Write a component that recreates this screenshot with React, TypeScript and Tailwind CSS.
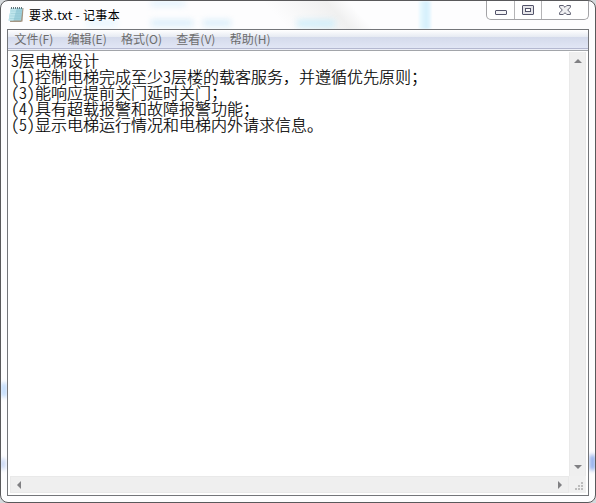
const menus = ["文件(F)", "编辑(E)", "格式(O)", "查看(V)", "帮助(H)"];

const lines = [
  "3层电梯设计",
  "(1)控制电梯完成至少3层楼的载客服务，并遵循优先原则；",
  "(3)能响应提前关门延时关门；",
  "(4)具有超载报警和故障报警功能；",
  "(5)显示电梯运行情况和电梯内外请求信息。",
];

function NotepadIcon() {
  return (
    <svg width="17" height="17" viewBox="0 0 17 17" className="shrink-0">
      <path d="M3.500 2h12l-1 13.500-2 .5H2z" fill="#a39583" />
      <path d="M2.800 2h11.800l-1.600 12.500H.6z" fill="#9ccfdb" />
      <path d="M2.800 2h6L5.500 14.500H.6z" fill="#bfe5ec" />
      <path d="M3 5h10.800M2.700 7.500h10.700M2.200 10h10.800M1.600 12.500h10.800" stroke="#8cc3d0" strokeWidth=".4" />
      <path d="M3.500 1v2M5.500 1v2M7.500 1v2M9.500 1v2M11.500 1v2M13.500 1v2" stroke="#60757b" strokeWidth="1" />
    </svg>
  );
}

function WindowButtons() {
  return (
    <div className="flex h-[19px] w-[103px] shrink-0 rounded-b-[5px] border border-t-0 border-[#a3a3a6] bg-white/70">
      <div className="flex w-[28px] justify-center border-r border-[#b4b4b6]">
        <svg width="12" height="18" viewBox="0 0 12 18">
          <rect x=".5" y="9.500" width="11" height="4" rx=".5" fill="#f4f4f6" stroke="#53546a" />
        </svg>
      </div>
      <div className="flex w-[27px] justify-center border-r border-[#b4b4b6]">
        <svg width="12" height="18" viewBox="0 0 12 18">
          <rect x=".5" y="4.500" width="11" height="9" rx=".5" fill="#e6e6ea" stroke="#53546a" />
          <rect x="3.500" y="7.500" width="5" height="3" fill="#fff" stroke="#53546a" />
        </svg>
      </div>
      <div className="flex flex-1 justify-center">
        <svg width="12" height="18" viewBox="0 0 12 18">
          <path d="M.6 4.500h3.600L6 6.300l1.800-1.800h3.600v1.700L8.700 9l2.700 2.800v1.700H7.800L6 11.700l-1.800 1.800H.6v-1.700L3.300 9 .6 6.200z" fill="#f0f0f2" stroke="#5d5e70" strokeLinejoin="round" />
        </svg>
      </div>
    </div>
  );
}

function Arrow({ d }: { d: string }) {
  return (
    <svg width="8" height="8" viewBox="0 0 8 8" className="shrink-0">
      <path d={d} fill="#808083" />
    </svg>
  );
}

// hwid keeps digits and brackets at half an ideograph; the comma stays full width
function Line({ text }: { text: string }) {
  return (
    <p className="whitespace-nowrap [font-feature-settings:'hwid']">
      {text.split(/(，)/).map((part, i) =>
        part === "，" ? <span key={i} className="[font-feature-settings:normal]">{part}</span> : part,
      )}
    </p>
  );
}

export default function App() {
  return (
    <div className="h-[503px] w-[596px] bg-[#d5d9dc] font-['Noto_Sans_CJK_SC',sans-serif]" lang="zh-CN">
      <div className="relative flex h-full flex-col overflow-hidden rounded-[8px] border border-[#59595b] bg-[#fdfdfe] pr-[6px] pb-[6px] pl-[6px]">
        <div className="absolute inset-x-0 top-0 h-[28px] overflow-hidden">
          <div className="absolute top-0 left-[250px] h-full w-[160px] bg-[linear-gradient(48deg,transparent_20%,#f0f0f0_54%,transparent_66%)]" />
          <div className="absolute top-0 left-[150px] h-[5px] w-[34px] bg-[#dff1fd] blur-[3px]" />
          <div className="absolute top-[19px] left-[86px] h-[6px] w-[30px] bg-[#e6f6fe] blur-[3px]" />
          <div className="absolute top-[19px] left-[150px] h-[6px] w-[42px] bg-[#d8edfa] blur-[3px]" />
          <div className="absolute top-[19px] left-[202px] h-[6px] w-[28px] bg-[#d8edfa] blur-[3px]" />
          <div className="absolute top-[19px] left-[296px] h-[7px] w-[38px] bg-[#cfeefa] blur-[3px]" />
          <div className="absolute top-0 left-[418px] h-full w-[12px] bg-[linear-gradient(90deg,#ecfbff,#d4effc_60%,#e8f8ff)] blur-[1px]" />
        </div>
        <div className="absolute top-[382px] left-0 h-[14px] w-[6px] bg-[#bdd9fb] blur-[2px]" />
        <div className="absolute top-[458px] left-0 h-[10px] w-[4px] bg-[#b6c9ef] blur-[2px]" />
        <div className="absolute top-[454px] right-0 h-[15px] w-[5px] bg-[#7fa0e8] blur-[2px]" />

        <div className="relative flex h-[28px] shrink-0 items-start justify-between">
          <div className="flex items-center gap-1 pt-[5px] pl-px">
            <NotepadIcon />
            <span className="text-[12px] leading-[17px] tracking-[0.3px] whitespace-nowrap text-black">要求.txt - 记事本</span>
          </div>
          <WindowButtons />
        </div>

        <div className="relative flex min-h-0 flex-1 flex-col border border-[#737579] bg-white">
          <div className="flex h-[19px] shrink-0 items-center gap-[14.3px] border-b border-[#b4b8d0] bg-[linear-gradient(#ffffff_0px,#e6eaf2_7px,#d4daeb_7px,#e1e6f5_18px)] pl-[6.5px] text-[12px] leading-[18px] text-[#6d6d6d]">
            {menus.map((menu) => (
              <span key={menu} className="whitespace-nowrap">{menu}</span>
            ))}
          </div>
          <div className="h-px shrink-0 bg-[#eceef7]" />
          <div className="flex min-h-0 flex-1 flex-col border-t border-[#a2a5aa] px-[2px] pt-px pb-[2px]">
            <div className="flex min-h-0 flex-1">
              <div className="min-w-0 flex-1 pl-px text-[16px] leading-[16px] font-light text-black [-webkit-text-stroke:0.2px_black]">
                {lines.map((line) => (
                  <Line key={line} text={line} />
                ))}
              </div>
              <div className="flex w-[17px] shrink-0 flex-col items-center justify-between border-x border-[#e9e9e9] bg-[#efefef] py-[5px]">
                <Arrow d="M0 6 4 2 8 6z" />
                <Arrow d="M0 2h8L4 6z" />
              </div>
            </div>
            <div className="flex h-[17px] shrink-0">
              <div className="flex flex-1 items-center justify-between border border-[#e9e9e9] bg-[#efefef] px-1">
                <Arrow d="M6 0v8L2 4z" />
                <Arrow d="M2 0v8l4-4z" />
              </div>
              <div className="flex w-[17px] items-end justify-end bg-[#f0f0f0] p-[2px]">
                <svg width="10" height="10" viewBox="0 0 10 10" fill="#bdbdbd">
                  <path d="M7 1h2v2H7zM4 4h2v2H4zM7 4h2v2H7zM1 7h2v2H1zM4 7h2v2H4zM7 7h2v2H7z" />
                </svg>
              </div>
            </div>
          </div>
        </div>
      </div>
    </div>
  );
}
